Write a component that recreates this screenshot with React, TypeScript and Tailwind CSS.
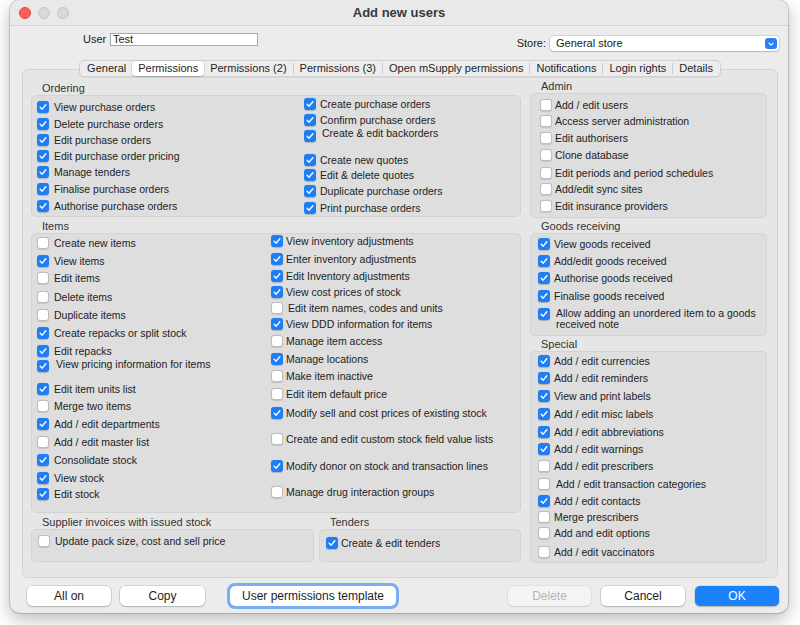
import React from "react";

type Row = { t: string; on: boolean; m: string; tx?: string };

const r = (t: string, on: boolean, m: string, tx?: string): Row => ({ t, on, m, tx });

function Check({ on }: { on: boolean }) {
  if (on) {
    return (
      <span className="flex h-[12px] w-[12px] shrink-0 items-center justify-center rounded-[3px] bg-[#1f7ef5] shadow-[0_0.5px_1px_rgba(0,0,0,0.2)]">
        <svg viewBox="0 0 12 12" className="h-[10px] w-[10px]">
          <path
            d="M2.6 6.3 L5 8.6 L9.4 3.3"
            fill="none"
            stroke="white"
            strokeWidth="1.7"
            strokeLinecap="round"
            strokeLinejoin="round"
          />
        </svg>
      </span>
    );
  }
  return (
    <span className="h-[12px] w-[12px] shrink-0 rounded-[3px] border-[0.5px] border-[#bdbdbd] bg-white shadow-[0_0.5px_1px_rgba(0,0,0,0.12)]" />
  );
}

function Col({ rows, gap, className }: { rows: Row[]; gap: string; className: string }) {
  return (
    <div className={"flex flex-col " + className}>
      {rows.map((row) => (
        <div key={row.t} className={"flex h-[14px] items-center " + row.m}>
          <Check on={row.on} />
          <span className={"whitespace-nowrap text-[10.5px] leading-[14px] " + (row.tx ?? gap)}>{row.t}</span>
        </div>
      ))}
    </div>
  );
}

function Label({ text, className }: { text: string; className: string }) {
  return <div className={"h-[13px] whitespace-nowrap pl-[11px] text-[11px] leading-[13px] text-[#333] " + className}>{text}</div>;
}

const groupBox = "rounded-[5px] border border-[#d3d3d3] bg-[#dedede]";

const orderingLeft: Row[] = [
  r("View purchase orders", true, "mt-[4px]"),
  r("Delete purchase orders", true, "mt-[3px]"),
  r("Edit purchase orders", true, "mt-[2px]"),
  r("Edit purchase order pricing", true, "mt-[2px]"),
  r("Manage tenders", true, "mt-[2px]"),
  r("Finalise purchase orders", true, "mt-[3px]"),
  r("Authorise purchase orders", true, "mt-[3px]"),
];

const orderingRight: Row[] = [
  r("Create purchase orders", true, "mt-[1px]"),
  r("Confirm purchase orders", true, "mt-[2px]"),
  r("Create & edit backorders", true, "mt-[2px]", "ml-[6px] mb-[6px]"),
  r("Create new quotes", true, "mt-[10px]"),
  r("Edit & delete quotes", true, "mt-[1px]"),
  r("Duplicate purchase orders", true, "mt-[2px]"),
  r("Print purchase orders", true, "mt-[3px]"),
];

const admin: Row[] = [
  r("Add / edit users", false, "mt-[4px]"),
  r("Access server administration", false, "mt-[2px]"),
  r("Edit authorisers", false, "mt-[3px]"),
  r("Clone database", false, "mt-[3px]"),
  r("Edit periods and period schedules", false, "mt-[4px]"),
  r("Add/edit sync sites", false, "mt-[2px]"),
  r("Edit insurance providers", false, "mt-[3px]"),
];

const itemsLeft: Row[] = [
  r("Create new items", false, "mt-[2px]"),
  r("View items", true, "mt-[4px]"),
  r("Edit items", false, "mt-[3px]"),
  r("Delete items", false, "mt-[5px]"),
  r("Duplicate items", false, "mt-[4px]"),
  r("Create repacks or split stock", true, "mt-[4px]"),
  r("Edit repacks", true, "mt-[4px]"),
  r("View pricing information for items", true, "mt-[1px]", "ml-[7px] mb-[4px]"),
  r("Edit item units list", true, "mt-[9px]"),
  r("Merge two items", false, "mt-[3px]"),
  r("Add / edit departments", true, "mt-[4px]"),
  r("Add / edit master list", false, "mt-[4px]"),
  r("Consolidate stock", true, "mt-[4px]"),
  r("View stock", true, "mt-[4px]"),
  r("Edit stock", true, "mt-[2px]"),
];

const itemsRight: Row[] = [
  r("View inventory adjustments", true, "mt-[0px]"),
  r("Enter inventory adjustments", true, "mt-[4px]"),
  r("Edit Inventory adjustments", true, "mt-[3px]"),
  r("View cost prices of stock", true, "mt-[2px]"),
  r("Edit item names, codes and units", false, "mt-[2px]", "ml-[5px]"),
  r("View DDD information for items", true, "mt-[2px]"),
  r("Manage item access", false, "mt-[3px]"),
  r("Manage locations", true, "mt-[4px]"),
  r("Make item inactive", false, "mt-[3px]"),
  r("Edit item default price", false, "mt-[4px]"),
  r("Modify sell and cost prices of existing stock", true, "mt-[5px]"),
  r("Create and edit custom stock field value lists", false, "mt-[12px]"),
  r("Modify donor on stock and transaction lines", true, "mt-[13px]"),
  r("Manage drug interaction groups", false, "mt-[12px]"),
];

const goods: Row[] = [
  r("View goods received", true, "mt-[3px]"),
  r("Add/edit goods received", true, "mt-[3px]"),
  r("Authorise goods received", true, "mt-[3px]"),
  r("Finalise goods received", true, "mt-[4px]"),
];

const special: Row[] = [
  r("Add / edit currencies", true, "mt-[2px]"),
  r("Add / edit reminders", true, "mt-[3px]"),
  r("View and print labels", true, "mt-[4px]"),
  r("Add / edit misc labels", true, "mt-[4px]"),
  r("Add / edit abbreviations", true, "mt-[4px]"),
  r("Add / edit warnings", true, "mt-[3px]"),
  r("Add / edit prescribers", false, "mt-[3px]"),
  r("Add / edit transaction categories", false, "mt-[4px]", "ml-[6px]"),
  r("Add / edit contacts", true, "mt-[3px]"),
  r("Merge prescribers", false, "mt-[2px]"),
  r("Add and edit options", false, "mt-[2px]"),
  r("Add / edit vaccinators", false, "mt-[5px]"),
];

const tabs = [
  "General",
  "Permissions",
  "Permissions (2)",
  "Permissions (3)",
  "Open mSupply permissions",
  "Notifications",
  "Login rights",
  "Details",
];

function TabBar() {
  const active = 1;
  return (
    <div className="relative z-10 mx-auto flex h-[17px] items-center rounded-[5px] border border-[#d0d0d0] bg-[#ededed] px-[1px] shadow-[0_0.5px_1px_rgba(0,0,0,0.06)]">
      {tabs.map((t, i) => {
        const showSep = i > 0 && i !== active && i - 1 !== active;
        return (
          <React.Fragment key={t}>
            {showSep ? <span className="h-[11px] w-px bg-[#cbcbcb]" /> : null}
            {i === active ? (
              <span className="flex h-[15px] items-center whitespace-nowrap rounded-[4px] bg-white px-[6px] text-[11px] text-[#1e1e1e] shadow-[0_0_0_0.5px_rgba(0,0,0,0.12),0_1px_1.5px_rgba(0,0,0,0.18)]">
                {t}
              </span>
            ) : (
              <span className="flex h-[15px] items-center whitespace-nowrap px-[6px] text-[11px] text-[#1e1e1e]">{t}</span>
            )}
          </React.Fragment>
        );
      })}
    </div>
  );
}

const btn =
  "flex h-[20px] items-center justify-center rounded-[5px] bg-white text-[12px] text-[#1e1e1e] shadow-[0_0_0_0.5px_rgba(0,0,0,0.2),0_1px_1.5px_rgba(0,0,0,0.16)]";

export default function App() {
  return (
    <div className="h-[625px] w-[800px] overflow-hidden bg-white font-['Liberation_Sans',Arial,sans-serif] text-[#222]">
      <div className="ml-[10px] flex h-[613px] w-[778px] flex-col rounded-[10px] bg-[#ececec] shadow-[0_0_0_1px_rgba(0,0,0,0.16),0_6px_18px_rgba(0,0,0,0.28)]">
        {/* title bar */}
        <div className="flex h-[26px] shrink-0 items-center rounded-t-[10px] border-b border-[#d4d4d4] bg-[#e9e9e9]">
          <div className="flex w-[90px] gap-[7px] pl-[9px]">
            <span className="h-[12px] w-[12px] rounded-full border-[0.5px] border-[#e0443e] bg-[#ff5f57]" />
            <span className="h-[12px] w-[12px] rounded-full border-[0.5px] border-[#c4c4c4] bg-[#d8d8d8]" />
            <span className="h-[12px] w-[12px] rounded-full border-[0.5px] border-[#c4c4c4] bg-[#d8d8d8]" />
          </div>
          <div className="flex-1 text-center text-[13px] font-bold text-[#3a3a3a]">Add new users</div>
          <div className="w-[90px]" />
        </div>

        {/* user / store */}
        <div className="flex h-[34px] shrink-0 items-start">
          <div className="ml-[73px] mt-[7px] flex items-center">
            <span className="w-[27px] text-[11px] leading-[13px]">User</span>
            <div className="flex h-[13px] w-[148px] items-center border border-[#a8a8a8] bg-white pl-[2px] text-[11px] leading-[11px]">
              Test
            </div>
          </div>
          <div className="ml-auto mr-[9px] mt-[10px] flex items-center">
            <span className="text-[11px] leading-[15px]">Store:</span>
            <div className="ml-[4px] flex h-[15px] w-[229px] items-center rounded-[4px] bg-white pl-[6px] pr-[2px] text-[11px] shadow-[0_0_0_0.5px_rgba(0,0,0,0.22),0_1px_1.5px_rgba(0,0,0,0.14)]">
              <span className="flex-1">General store</span>
              <span className="flex h-[11px] w-[12px] items-center justify-center rounded-[3px] bg-[#2a80f6]">
                <svg viewBox="0 0 10 10" className="h-[8px] w-[8px]">
                  <path d="M2.5 4 L5 6.5 L7.5 4" fill="none" stroke="white" strokeWidth="1.5" strokeLinecap="round" strokeLinejoin="round" />
                </svg>
              </span>
            </div>
          </div>
        </div>

        {/* tabs and pane */}
        <div className="ml-[12px] w-[756px]">
          <div className="flex justify-center">
            <TabBar />
          </div>
          <div className="-mt-[8px] flex h-[509px] items-start gap-[9px] rounded-[6px] border border-[#d3d3d3] bg-[#e6e6e6] px-[8px]">
            {/* left column */}
            <div className="flex w-[490px] flex-col">
              <Label text="Ordering" className="mt-[12px]" />
              <div className={"flex h-[122px] " + groupBox}>
                <Col rows={orderingLeft} gap="ml-[5px]" className="w-[272px] pl-[5px]" />
                <Col rows={orderingRight} gap="ml-[4px]" className="" />
              </div>
              <Label text="Items" className="mt-[3px]" />
              <div className={"flex h-[280px] " + groupBox}>
                <Col rows={itemsLeft} gap="ml-[5px]" className="w-[239px] pl-[5px]" />
                <Col rows={itemsRight} gap="ml-[3px]" className="" />
              </div>
              <div className="mt-[3px] flex gap-[5px]">
                <div className="flex w-[283px] flex-col">
                  <Label text="Supplier invoices with issued stock" className="" />
                  <div className={"h-[33px] " + groupBox}>
                    <Col rows={[r("Update pack size, cost and sell price", false, "mt-[4px]")]} gap="ml-[5px]" className="pl-[6px]" />
                  </div>
                </div>
                <div className="flex flex-1 flex-col">
                  <Label text="Tenders" className="" />
                  <div className={"h-[33px] " + groupBox}>
                    <Col rows={[r("Create & edit tenders", true, "mt-[6px]")]} gap="ml-[3px]" className="pl-[6px]" />
                  </div>
                </div>
              </div>
            </div>

            {/* right column */}
            <div className="flex w-[237px] flex-col">
              <Label text="Admin" className="mt-[10px]" />
              <div className={"h-[125px] " + groupBox}>
                <Col rows={admin} gap="ml-[3px]" className="pl-[9px]" />
              </div>
              <Label text="Goods receiving" className="mt-[2px]" />
              <div className={"h-[103px] " + groupBox}>
                <Col rows={goods} gap="ml-[4px]" className="pl-[7px]" />
                <div className="mt-[4px] flex items-start pl-[7px]">
                  <span className="mt-[1px]">
                    <Check on={true} />
                  </span>
                  <span className="ml-[6px] mt-[1px] whitespace-nowrap text-[10.5px] leading-[11px]">
                    Allow adding an unordered item to a goods
                    <br />
                    received note
                  </span>
                </div>
              </div>
              <Label text="Special" className="mt-[2px]" />
              <div className={"h-[212px] " + groupBox}>
                <Col rows={special} gap="ml-[4px]" className="pl-[7px]" />
              </div>
            </div>
          </div>
        </div>

        {/* buttons */}
        <div className="mt-[8px] flex pl-[17px] pr-[9px]">
          <div className={btn + " w-[84px]"}>All on</div>
          <div className={btn + " ml-[9px] w-[85px]"}>Copy</div>
          <div className={btn + " ml-[25px] w-[166px] outline-[3px] outline-[#79aef6]"} style={{ outlineStyle: "solid" }}>
            User permissions template
          </div>
          <div className="ml-auto flex h-[20px] w-[83px] items-center justify-center rounded-[5px] bg-[#f4f4f4] text-[12px] text-[#b4b4b4] shadow-[0_0_0_0.5px_rgba(0,0,0,0.1),0_1px_1px_rgba(0,0,0,0.06)]">
            Delete
          </div>
          <div className={btn + " ml-[10px] w-[84px]"}>Cancel</div>
          <div className="ml-[10px] flex h-[20px] w-[84px] items-center justify-center rounded-[5px] bg-[#1b82fa] text-[12px] text-white shadow-[0_0_0_0.5px_rgba(0,0,0,0.15),0_1px_1.5px_rgba(0,0,0,0.18)]">
            OK
          </div>
        </div>
      </div>
    </div>
  );
}
